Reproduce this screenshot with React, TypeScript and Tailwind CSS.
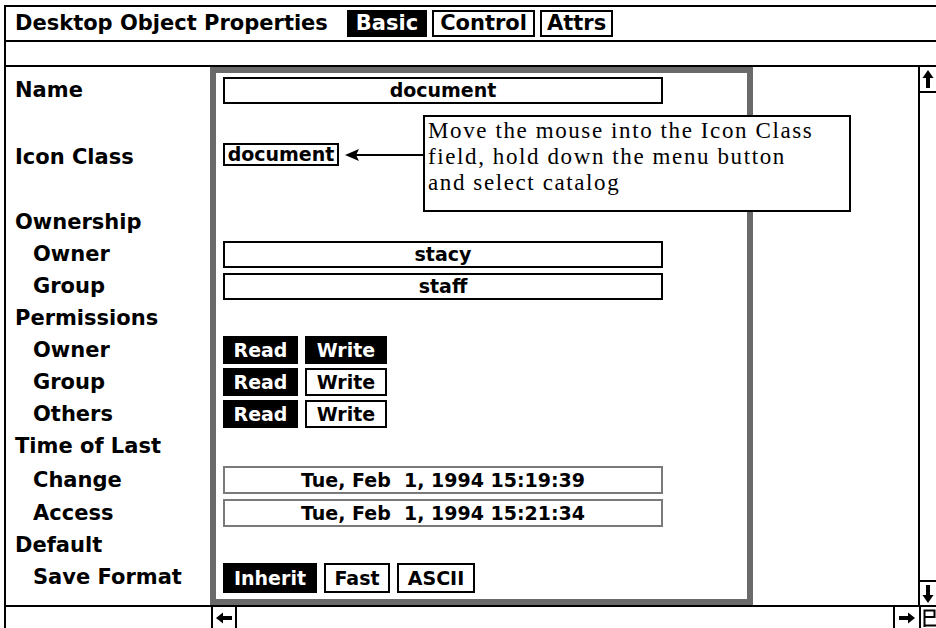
import React from 'react';

type Row = {
  label: string;
  indent?: boolean;
  gapLeft: string;
  gapRight: string;
  kind?: 'name' | 'icon' | 'text' | 'perm' | 'time' | 'save';
  text?: string;
  write?: boolean;
};

const rows: Row[] = [
  { label: 'Name', gapLeft: 'mt-[7px]', gapRight: 'mt-[1px]', kind: 'name', text: 'document' },
  { label: 'Icon Class', gapLeft: 'mt-[35px]', gapRight: 'mt-[35px]', kind: 'icon' },
  { label: 'Ownership', gapLeft: 'mt-[33px]', gapRight: 'mt-[33px]' },
  { label: 'Owner', indent: true, gapLeft: '', gapRight: '', kind: 'text', text: 'stacy' },
  { label: 'Group', indent: true, gapLeft: '', gapRight: '', kind: 'text', text: 'staff' },
  { label: 'Permissions', gapLeft: '', gapRight: '' },
  { label: 'Owner', indent: true, gapLeft: '', gapRight: '', kind: 'perm', write: true },
  { label: 'Group', indent: true, gapLeft: '', gapRight: '', kind: 'perm', write: false },
  { label: 'Others', indent: true, gapLeft: '', gapRight: '', kind: 'perm', write: false },
  { label: 'Time of Last', gapLeft: '', gapRight: '' },
  { label: 'Change', indent: true, gapLeft: 'mt-[2px]', gapRight: 'mt-[2px]', kind: 'time', text: 'Tue, Feb  1, 1994 15:19:39' },
  { label: 'Access', indent: true, gapLeft: 'mt-[1px]', gapRight: 'mt-[1px]', kind: 'time', text: 'Tue, Feb  1, 1994 15:21:34' },
  { label: 'Default', gapLeft: '', gapRight: '' },
  { label: 'Save Format', indent: true, gapLeft: '', gapRight: '', kind: 'save' },
];

const Toggle = ({ on, w, children }: { on: boolean; w: string; children: React.ReactNode }) => (
  <div
    className={`${w} flex items-center justify-center text-[19px] leading-none ${
      on ? 'bg-black text-white' : 'bg-white text-black border-2 border-black'
    }`}
  >
    {children}
  </div>
);

const Value = ({ row }: { row: Row }) => {
  if (row.kind === 'name' || row.kind === 'text') {
    return (
      <div className="w-[440px] h-[27px] border-2 border-black flex items-center justify-center text-[19px] leading-none">
        {row.text}
      </div>
    );
  }
  if (row.kind === 'icon') {
    return (
      <div className="w-[116px] h-[23px] mb-[6px] border-2 border-black flex items-center justify-center text-[19px] leading-none">
        document
      </div>
    );
  }
  if (row.kind === 'time') {
    return (
      <div className="w-[440px] h-[28px] border-2 border-[#7a7a7a] flex items-center justify-center text-[19px] leading-none whitespace-pre">
        {row.text}
      </div>
    );
  }
  if (row.kind === 'perm') {
    return (
      <div className="flex gap-[7px]">
        <Toggle on w="w-[75px] h-[28px]">Read</Toggle>
        <Toggle on={!!row.write} w="w-[82px] h-[28px]">Write</Toggle>
      </div>
    );
  }
  if (row.kind === 'save') {
    return (
      <div className="flex gap-[7px] mt-[2px]">
        <Toggle on w="w-[94px] h-[30px]">Inherit</Toggle>
        <Toggle on={false} w="w-[66px] h-[30px]">Fast</Toggle>
        <Toggle on={false} w="w-[78px] h-[30px]">ASCII</Toggle>
      </div>
    );
  }
  return null;
};

const UpArrow = () => (
  <svg width="14" height="22" viewBox="0 0 14 22">
    <polygon points="7,2 1.5,10 12.5,10" fill="black" />
    <rect x="5" y="9" width="4" height="11" fill="black" />
  </svg>
);

const DownArrow = () => (
  <svg width="14" height="22" viewBox="0 0 14 22">
    <polygon points="7,20 1.5,12 12.5,12" fill="black" />
    <rect x="5" y="2" width="4" height="11" fill="black" />
  </svg>
);

const SideArrow = ({ right }: { right?: boolean }) => (
  <svg width="18" height="12" viewBox="0 0 18 12" className={right ? 'rotate-180' : ''}>
    <polygon points="1,6 8,0.5 8,11.5" fill="black" />
    <rect x="7" y="4" width="10" height="4" fill="black" />
  </svg>
);

export default function App() {
  return (
    <div className="w-[936px] h-[628px] overflow-hidden bg-white pt-[5px] pl-[4px] text-black font-bold font-['DejaVu_Sans',sans-serif]">
      <div className="h-full border-l-2 border-t-2 border-black flex flex-col">
        {/* title bar */}
        <div className="h-[35px] shrink-0 border-b-2 border-black flex items-center pl-[9px] text-[21px] leading-none">
          <span>Desktop Object Properties</span>
          <div className="ml-[19px] flex gap-[5px]">
            <div className="h-[27px] px-[9px] bg-black text-white flex items-center">Basic</div>
            <div className="h-[27px] px-[6px] border-2 border-black flex items-center">Control</div>
            <div className="h-[27px] px-[5px] border-2 border-black flex items-center">Attrs</div>
          </div>
        </div>
        <div className="h-[25px] shrink-0 border-b-2 border-black" />

        {/* main area */}
        <div className="h-[540px] shrink-0 border-b-2 border-black flex">
          <div className="w-[204px] shrink-0 flex flex-col text-[21px] leading-none">
            {rows.map((r, i) => (
              <div
                key={i}
                className={`h-8 shrink-0 flex items-center ${r.indent ? 'pl-[27px]' : 'pl-[9px]'} ${r.gapLeft}`}
              >
                {r.label}
              </div>
            ))}
          </div>

          <div className="w-[543px] shrink-0 border-[6px] border-[#6a6a6a] relative">
            <div className="flex flex-col">
              {rows.map((r, i) => (
                <div key={i} className={`h-8 shrink-0 flex items-center pl-[7px] ${r.gapRight}`}>
                  <Value row={r} />
                </div>
              ))}
            </div>

            <svg className="absolute left-[129px] top-[76px]" width="80" height="12" viewBox="0 0 80 12">
              <polygon points="0,6 14,0 11,6 14,12" fill="black" />
              <rect x="10" y="5" width="70" height="2" fill="black" />
            </svg>

            <div className="absolute z-10 left-[207px] top-[42px] w-[428px] h-[97px] bg-white border-2 border-black pl-[3px] pt-[1px] font-normal font-['Liberation_Serif',serif] text-[23px] leading-[26px] tracking-[1.6px]">
              <div className="whitespace-nowrap">Move the mouse into the Icon Class</div>
              <div className="whitespace-nowrap">field, hold down the menu button</div>
              <div className="whitespace-nowrap">and select catalog</div>
            </div>
          </div>

          <div className="w-[165px] shrink-0" />

          <div className="flex-1 border-l-2 border-black flex flex-col">
            <div className="h-[26px] border-b-2 border-black flex items-center justify-center">
              <UpArrow />
            </div>
            <div className="flex-1" />
            <div className="h-[25px] border-t-2 border-black flex items-center justify-center">
              <DownArrow />
            </div>
          </div>
        </div>

        {/* bottom scroll row */}
        <div className="flex-1 flex">
          <div className="w-[205px] shrink-0" />
          <div className="w-[26px] shrink-0 border-x-2 border-black flex items-center justify-center">
            <SideArrow />
          </div>
          <div className="flex-1" />
          <div className="w-[26px] shrink-0 border-l-2 border-black flex items-center justify-center">
            <SideArrow right />
          </div>
          <div className="w-[17px] shrink-0 border-l-2 border-black flex items-start pt-[2px] pl-[2px]">
            <svg width="13" height="18" viewBox="0 0 13 18">
              <path d="M1.5 18 V1.5 H11.5 V8 H1.5 M1.5 16.5 H13" stroke="black" strokeWidth="2" fill="none" />
            </svg>
          </div>
        </div>
      </div>
    </div>
  );
}
